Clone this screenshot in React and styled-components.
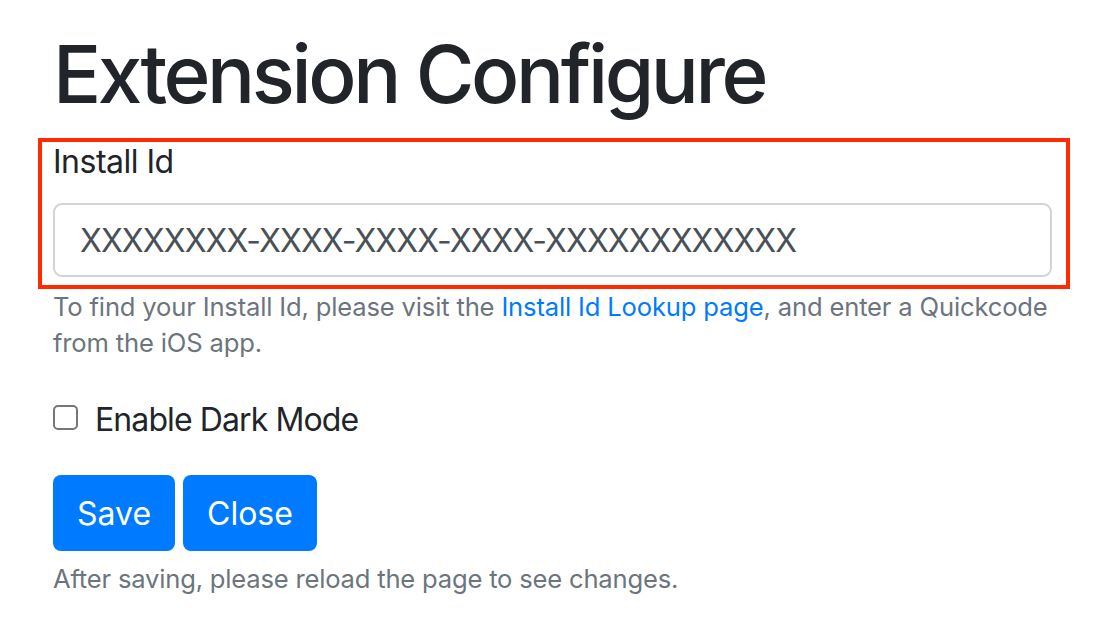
import styled, { createGlobalStyle } from 'styled-components';

const GlobalStyle = createGlobalStyle`
    * {
        box-sizing: border-box;
    }
    body {
        margin: 0;
        background: #ffffff;
        font-family: Inter, "Liberation Sans", sans-serif;
        color: #212529;
    }
`;

const Page = styled.div`
    padding: 26px 50px 0 53px;
`;

const Title = styled.h1`
    margin: 0 0 16px;
    font-size: 80px;
    line-height: 96px;
    font-weight: 500;
    letter-spacing: -3.4px;
    color: #212529;
`;

const Highlight = styled.div`
    margin: 0 -18px 0 -15px;
    padding: 0 14px 8px 11px;
    border: 4px solid #ff2a00;
`;

const Label = styled.label`
    display: block;
    margin-bottom: 21px;
    font-size: 32px;
    line-height: 40px;
    letter-spacing: -0.5px;
    color: #212529;
`;

const Input = styled.input`
    display: block;
    width: 100%;
    height: 74px;
    padding: 0 25px;
    border: 2px solid #ced4da;
    border-radius: 9px;
    font-family: inherit;
    font-size: 32px;
    letter-spacing: -0.9px;
    color: #495057;
    background: #ffffff;
    outline: none;
`;

const Help = styled.p`
    margin: 0;
    font-size: 25.6px;
    line-height: 36px;
    letter-spacing: -0.17px;
    color: #6c757d;
`;

const Link = styled.a`
    color: #007bff;
    text-decoration: none;
`;

const CheckRow = styled.div`
    display: flex;
    align-items: flex-start;
    gap: 17px;
    margin-top: 39px;
`;

const Checkbox = styled.input`
    appearance: none;
    width: 25px;
    height: 25px;
    margin: 5px 0 0;
    border: 2px solid #767676;
    border-radius: 5px;
    background: #ffffff;
`;

const CheckLabel = styled.label`
    font-size: 32px;
    line-height: 40px;
    letter-spacing: -0.9px;
    color: #212529;
`;

const Buttons = styled.div`
    display: flex;
    gap: 8px;
    margin-top: 35px;
`;

const Button = styled.button`
    height: 76px;
    padding: 0 24px;
    border: none;
    border-radius: 8px;
    background: #007bff;
    color: #ffffff;
    font-family: inherit;
    font-size: 32px;
    cursor: pointer;
`;

const Note = styled.p`
    margin: 10px 0 0;
    font-size: 25.6px;
    line-height: 36px;
    letter-spacing: -0.2px;
    color: #6c757d;
`;

export default function App() {
    return (
        <>
            <GlobalStyle />
            <Page>
                <Title>Extension Configure</Title>
                <Highlight>
                    <Label htmlFor="installId">Install Id</Label>
                    <Input id="installId" defaultValue="XXXXXXXX-XXXX-XXXX-XXXX-XXXXXXXXXXXX" />
                </Highlight>
                <Help>
                    To find your Install Id, please visit the <Link href="#">Install Id Lookup page</Link>, and enter a Quickcode from the iOS app.
                </Help>
                <CheckRow>
                    <Checkbox type="checkbox" id="darkMode" />
                    <CheckLabel htmlFor="darkMode">Enable Dark Mode</CheckLabel>
                </CheckRow>
                <Buttons>
                    <Button>Save</Button>
                    <Button>Close</Button>
                </Buttons>
                <Note>After saving, please reload the page to see changes.</Note>
            </Page>
        </>
    );
}
